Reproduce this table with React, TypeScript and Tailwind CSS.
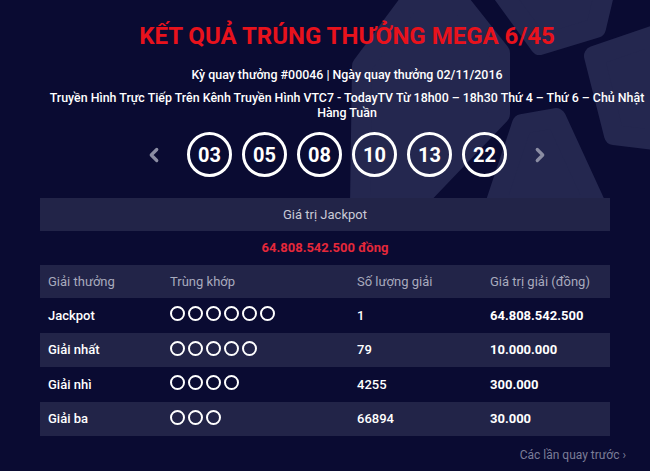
import { ChevronLeft, ChevronRight } from "lucide-react";

const BALLS = ["03", "05", "08", "10", "13", "22"];

const PRIZES = [
  { name: "Jackpot", match: 6, count: "1", value: "64.808.542.500" },
  { name: "Giải nhất", match: 5, count: "79", value: "10.000.000" },
  { name: "Giải nhì", match: 4, count: "4255", value: "300.000" },
  { name: "Giải ba", match: 3, count: "66894", value: "30.000" },
];

const COLS = "grid grid-cols-[122px_187px_133px_1fr] items-center px-2";

// decorative pinwheel behind the header
function Pinwheel() {
  const petal = {
    fill: "#24274f",
    stroke: "#24274f",
    strokeWidth: 20,
    strokeLinejoin: "round" as const,
  };
  return (
    <svg className="absolute left-0 top-0" width="650" height="200" viewBox="0 0 650 200">
      <polygon points="362,66 411,0 458,0 500,53 500,114 413,205 360,205" {...petal} />
      <polygon points="500,-10 605,-10 596,28 540,45" {...petal} />
      <polygon points="594,56 655,35 655,140 614,135" {...petal} />
      <polygon points="495,205 522,124 556,118 596,205" {...petal} />
    </svg>
  );
}

function Ball({ n }: { n: string }) {
  return (
    <div className="w-[45px] h-[45px] rounded-full border-[3px] border-white flex items-center justify-center text-[20px] font-bold text-white">
      {n}
    </div>
  );
}

export default function App() {
  return (
    <div className="relative w-[650px] h-[471px] overflow-hidden bg-[#0a0b32] font-['Roboto',sans-serif] text-white">
      <Pinwheel />

      <div className="relative">
        {/* header */}
        <div className="ml-[44px] flex flex-col items-center pt-[20px]">
          <h1 className="text-[24px] font-bold leading-[32px] text-[#e8121c]">
            KẾT QUẢ TRÚNG THƯỞNG MEGA 6/45
          </h1>
          <p className="mt-[14px] text-[12.4px] font-medium leading-[18px]">
            Kỳ quay thưởng #00046 | Ngày quay thưởng 02/11/2016
          </p>
          <p className="mt-[6px] whitespace-nowrap text-center text-[12.4px] font-medium leading-[15px]">
            Truyền Hình Trực Tiếp Trên Kênh Truyền Hình VTC7 - TodayTV Từ 18h00 – 18h30 Thứ 4 – Thứ 6 – Chủ Nhật
            <br />
            Hàng Tuần
          </p>
          <div className="mt-[12px] flex items-center gap-[10px]">
            <ChevronLeft className="mr-[12px] h-[22px] w-[22px] text-[#8b8da3]" strokeWidth={3.5} />
            {BALLS.map(b => (
              <Ball key={b} n={b} />
            ))}
            <ChevronRight className="ml-[12px] h-[22px] w-[22px] text-[#8b8da3]" strokeWidth={3.5} />
          </div>
        </div>

        {/* results table */}
        <div className="mx-[40px] mt-[21px] text-[13px]">
          <div className="h-[33px] flex items-center justify-center bg-[#222448] text-[#c9cad6]">
            Giá trị Jackpot
          </div>
          <div className="h-[34px] flex items-center justify-center font-bold text-[#e5283a]">
            64.808.542.500 đồng
          </div>
          <div className={`${COLS} h-[33px] bg-[#222448] text-[#a8aabd]`}>
            <span>Giải thưởng</span>
            <span>Trùng khớp</span>
            <span>Số lượng giải</span>
            <span>Giá trị giải (đồng)</span>
          </div>
          {PRIZES.map((p, i) => (
            <div
              key={p.name}
              className={`${COLS} h-[34.5px] font-medium ${i % 2 === 1 ? "bg-[#222448]" : ""}`}
            >
              <span>{p.name}</span>
              <span className="flex gap-[3px] -mt-[3px]">
                {Array.from({ length: p.match }).map((_, k) => (
                  <span key={k} className="w-[15px] h-[15px] rounded-full border-2 border-white" />
                ))}
              </span>
              <span>{p.count}</span>
              <span className="font-bold">{p.value}</span>
            </div>
          ))}
        </div>

        <div className="mr-[24px] mt-[10px] text-right text-[12px] text-[#7b7d97]">
          Các lần quay trước ›
        </div>
      </div>
    </div>
  );
}
